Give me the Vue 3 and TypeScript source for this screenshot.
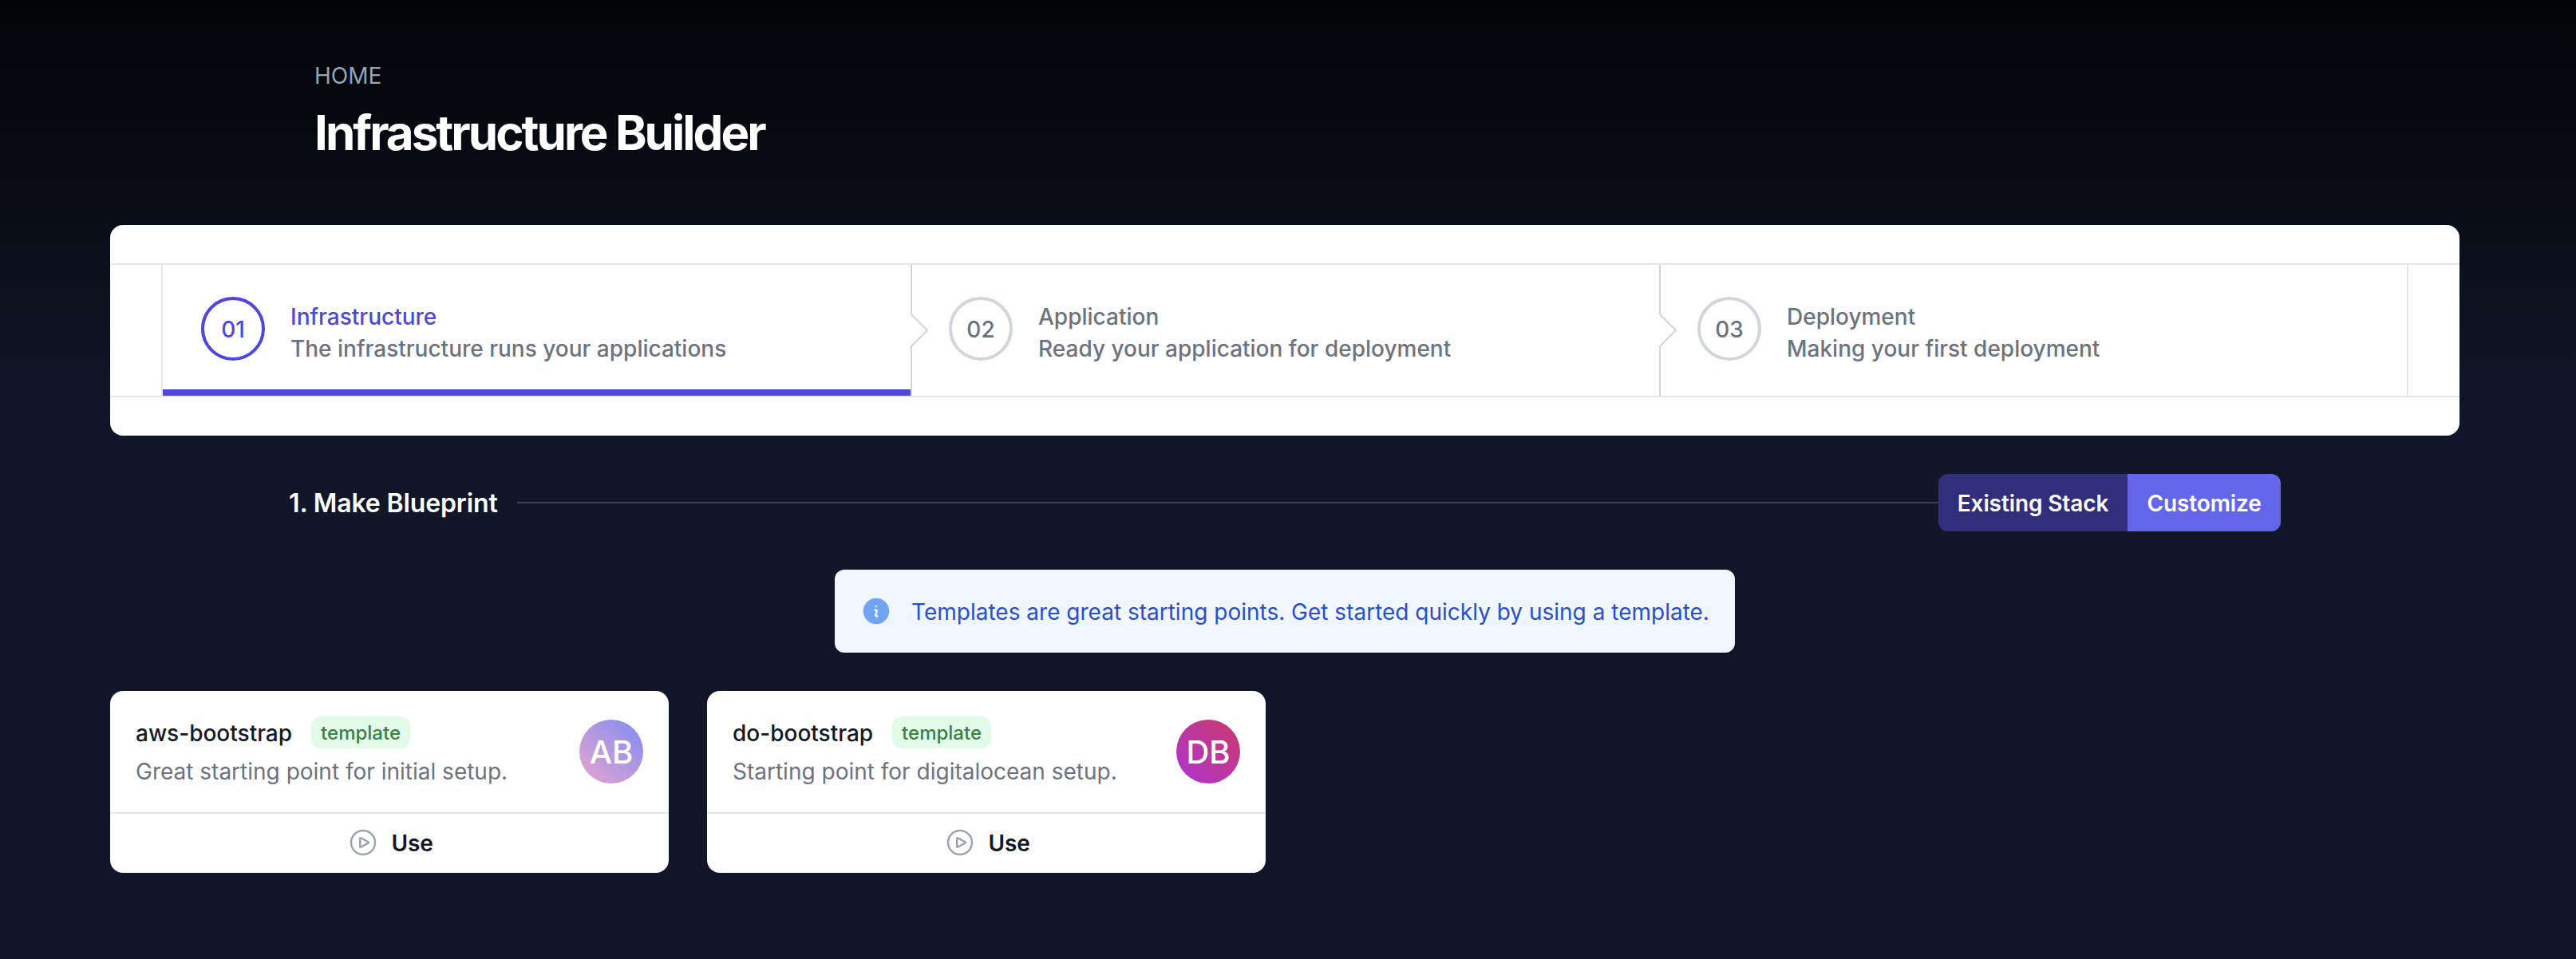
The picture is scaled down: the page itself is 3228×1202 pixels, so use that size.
<script setup lang="ts">
interface Step {
  id: string
  name: string
  description: string
  current: boolean
}

interface Template {
  name: string
  description: string
  initials: string
  tone: string
}

const steps: Step[] = [
  { id: '01', name: 'Infrastructure', description: 'The infrastructure runs your applications', current: true },
  { id: '02', name: 'Application', description: 'Ready your application for deployment', current: false },
  { id: '03', name: 'Deployment', description: 'Making your first deployment', current: false },
]

const templates: Template[] = [
  { name: 'aws-bootstrap', description: 'Great starting point for initial setup.', initials: 'AB', tone: 'lilac' },
  { name: 'do-bootstrap', description: 'Starting point for digitalocean setup.', initials: 'DB', tone: 'magenta' },
]
</script>

<template>
  <div class="page">
    <header class="header">
      <p class="crumb">HOME</p>
      <h1 class="title">Infrastructure Builder</h1>
    </header>

    <main class="main">
      <section class="panel">
        <nav class="band">
          <ol class="steps">
            <li v-for="(step, i) in steps" :key="step.id" class="step" :class="{ current: step.current }">
              <span class="circle">{{ step.id }}</span>
              <span class="labels">
                <span class="step-name">{{ step.name }}</span>
                <span class="step-desc">{{ step.description }}</span>
              </span>
              <svg v-if="i > 0" class="separator" viewBox="0 0 12 82" fill="none" preserveAspectRatio="none">
                <path d="M0.5 0V31L10.5 41L0.5 51V82" stroke="currentColor" />
              </svg>
            </li>
          </ol>
        </nav>
      </section>

      <div class="section-head">
        <h2 class="section-title">1. Make Blueprint</h2>
        <span class="rule"></span>
        <div class="toggle">
          <button type="button" class="toggle-btn">Existing Stack</button>
          <button type="button" class="toggle-btn active">Customize</button>
        </div>
      </div>

      <div class="alert">
        <svg class="alert-icon" viewBox="0 0 24 24" fill="currentColor">
          <path
            fill-rule="evenodd"
            clip-rule="evenodd"
            d="M2.25 12c0-5.385 4.365-9.75 9.75-9.75s9.75 4.365 9.75 9.75-4.365 9.75-9.75 9.75S2.25 17.385 2.25 12zm8.706-1.442c1.146-.573 2.437.463 2.126 1.706l-.709 2.836.042-.02a.75.75 0 01.67 1.34l-.04.022c-1.147.573-2.438-.463-2.127-1.706l.71-2.836-.042.02a.75.75 0 11-.671-1.34l.041-.022zM12 9a.75.75 0 100-1.5.75.75 0 000 1.5z"
          />
        </svg>
        <p class="alert-text">Templates are great starting points. Get started quickly by using a template.</p>
      </div>

      <ul class="cards">
        <li v-for="t in templates" :key="t.name" class="card">
          <div class="card-body">
            <div>
              <div class="card-head">
                <h3 class="card-name">{{ t.name }}</h3>
                <span class="badge">template</span>
              </div>
              <p class="card-desc">{{ t.description }}</p>
            </div>
            <span class="avatar" :class="t.tone">{{ t.initials }}</span>
          </div>
          <a class="card-action">
            <svg class="play" viewBox="0 0 24 24" fill="none" stroke="currentColor" stroke-width="1.5" stroke-linecap="round" stroke-linejoin="round">
              <path d="M21 12a9 9 0 11-18 0 9 9 0 0118 0z" />
              <path d="M15.91 11.672a.375.375 0 010 .656l-5.603 3.113a.375.375 0 01-.557-.328V8.887c0-.286.307-.466.557-.327l5.603 3.112z" />
            </svg>
            <span class="action-label">Use</span>
          </a>
        </li>
      </ul>
    </main>
  </div>
</template>

<style>
body {
  margin: 0;
  background: #111729;
}
</style>

<style scoped>
.page {
  box-sizing: border-box;
  width: 3228px;
  height: 1202px;
  padding-right: 8px;
  overflow: hidden;
  background: linear-gradient(to bottom, #020306 0, #111729 546px);
  font-family: Inter, 'Liberation Sans', sans-serif;
  font-size: 28px;
  line-height: 40px;
}
h1, h2, h3, p, ol, ul {
  margin: 0;
  padding: 0;
  list-style: none;
}
.header {
  box-sizing: border-box;
  width: 2560px;
  height: 282px;
  margin: 0 auto;
  padding: 75px 64px 0;
}
.crumb {
  color: #97a3b6;
}
.title {
  margin-top: 15px;
  color: #fff;
  font-size: 60px;
  font-weight: 700;
  line-height: 72px;
  letter-spacing: -0.0495em;
}
.main {
  width: 2944px;
  margin: 0 auto;
}
.panel {
  padding: 48px 0;
  border-radius: 16px;
  background: #fff;
}
.band {
  padding: 0 64px;
  border-top: 2px solid #e5e7eb;
  border-bottom: 2px solid #e5e7eb;
}
.steps {
  display: grid;
  grid-template-columns: 937px 938px 937px;
  border: solid #e5e7eb;
  border-width: 0 2px;
}
.step {
  position: relative;
  display: flex;
  height: 164px;
  box-sizing: border-box;
  padding: 40px 48px;
  color: #6c727f;
  font-weight: 500;
}
.step.current::after {
  content: '';
  position: absolute;
  left: 0;
  bottom: 0;
  width: 100%;
  height: 8px;
  background: #4e46dd;
}
.circle {
  box-sizing: border-box;
  display: flex;
  flex: none;
  align-items: center;
  justify-content: center;
  width: 80px;
  height: 80px;
  padding-top: 2px;
  border: 4px solid #d2d5da;
  border-radius: 50%;
}
.current .circle {
  border-color: #4e46dd;
  color: #4e46dd;
}
.labels {
  display: flex;
  flex-direction: column;
  margin: 5px 0 0 32px;
}
.current .step-name {
  color: #4e46dd;
}
.separator {
  position: absolute;
  top: 0;
  left: 0;
  width: 24px;
  height: 164px;
  color: #d2d5da;
}
.section-head {
  display: flex;
  align-items: center;
  width: 2496px;
  margin: 48px auto 0;
}
.section-title {
  margin: 1px 0 -1px;
  padding-right: 24px;
  color: #fff;
  font-size: 32px;
  font-weight: 600;
  line-height: 48px;
  letter-spacing: -0.004em;
}
.rule {
  flex: 1;
  height: 2px;
  background: #384150;
}
.toggle {
  display: flex;
  overflow: hidden;
  border-radius: 12px;
}
.toggle-btn {
  box-sizing: border-box;
  width: 237px;
  height: 72px;
  padding: 2px 0 0;
  border: 0;
  background: #312e7c;
  color: #fff;
  font: 600 28px/40px Inter, 'Liberation Sans', sans-serif;
  letter-spacing: -0.004em;
}
.toggle-btn.active {
  width: 192px;
  background: #6466e9;
}
.alert {
  display: flex;
  width: fit-content;
  margin: 48px auto 0;
  padding: 32px;
  border-radius: 12px;
  background: #f0f6fe;
}
.alert-icon {
  width: 40px;
  height: 40px;
  color: #71a4f3;
}
.alert-text {
  margin: 1px 0 -1px 24px;
  color: #2a4dd0;
}
.cards {
  display: grid;
  grid-template-columns: repeat(4, 1fr);
  gap: 48px;
  margin-top: 48px;
}
.card {
  border-radius: 16px;
  background: #fff;
}
.card-body {
  display: flex;
  align-items: center;
  justify-content: space-between;
  padding: 32px;
}
.card-head {
  display: flex;
  align-items: center;
  gap: 24px;
}
.card-name {
  margin: 1px 0 -1px;
  color: #121826;
  font-size: 28px;
  font-weight: 500;
  line-height: 40px;
}
.badge {
  padding: 5px 12px 3px;
  border-radius: 12px;
  background: #e2fbe9;
  color: #3c7e44;
  font-size: 24px;
  font-weight: 500;
  line-height: 32px;
}
.card-desc {
  margin: 9px 0 -1px;
  color: #6c727f;
}
.avatar {
  box-sizing: border-box;
  display: flex;
  align-items: center;
  justify-content: center;
  width: 80px;
  height: 80px;
  padding-top: 1px;
  border-radius: 50%;
  color: #fff;
  font-size: 40px;
  font-weight: 500;
}
.avatar.lilac {
  background: linear-gradient(45deg, #e8a4cc, #7f8df5);
}
.avatar.magenta {
  background: linear-gradient(45deg, #ae34d2, #cc3a6a);
}
.card-action {
  display: flex;
  align-items: center;
  justify-content: center;
  gap: 15px;
  height: 72px;
  padding: 0 0 2px 2px;
  border-top: 2px solid #e5e7eb;
  color: #121826;
  font-weight: 600;
}
.action-label {
  margin: 1px 0 -1px;
  letter-spacing: -0.004em;
}
.play {
  width: 40px;
  height: 40px;
  color: #9da3ae;
}
</style>
